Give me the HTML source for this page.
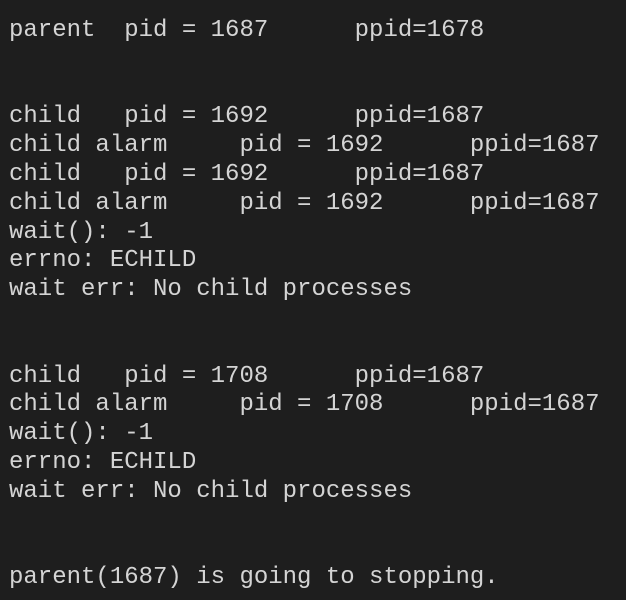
<!DOCTYPE html>
<html><head><style>
html,body{margin:0;padding:0;background:#1e1e1e;width:626px;height:600px;overflow:hidden}
pre{margin:0;padding:17px 0 0 9px;font-family:"Liberation Mono",monospace;font-size:24px;line-height:28.8px;color:#d4d4d4}
</style></head><body><pre>parent  pid = 1687      ppid=1678


child   pid = 1692      ppid=1687
child alarm     pid = 1692      ppid=1687
child   pid = 1692      ppid=1687
child alarm     pid = 1692      ppid=1687
wait(): -1
errno: ECHILD
wait err: No child processes


child   pid = 1708      ppid=1687
child alarm     pid = 1708      ppid=1687
wait(): -1
errno: ECHILD
wait err: No child processes


parent(1687) is going to stopping.</pre></body></html>
